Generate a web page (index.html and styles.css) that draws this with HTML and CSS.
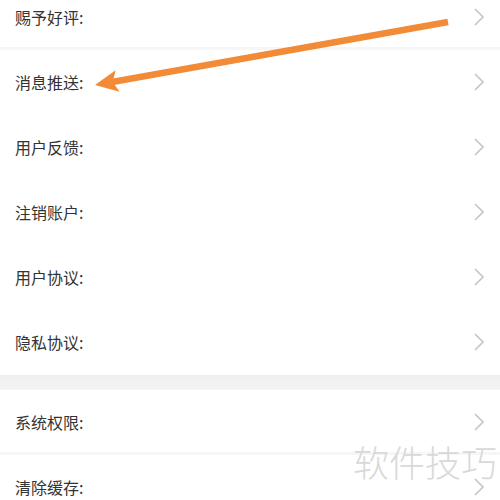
FILE: index.html
```html
<!DOCTYPE html>
<html lang="zh-CN">
<head>
<meta charset="utf-8">
<title>设置</title>
<link rel="stylesheet" href="styles.css">
</head>
<body>
<div class="page">
  <div class="group group-first">
    <div class="row row-first"><span class="label">赐予好评:</span><svg class="chev" viewBox="0 0 10 18"><polyline points="1,1 9,9 1,17"/></svg></div>
    <div class="row"><span class="label">消息推送:</span><svg class="chev" viewBox="0 0 10 18"><polyline points="1,1 9,9 1,17"/></svg></div>
    <div class="row"><span class="label">用户反馈:</span><svg class="chev" viewBox="0 0 10 18"><polyline points="1,1 9,9 1,17"/></svg></div>
    <div class="row"><span class="label">注销账户:</span><svg class="chev" viewBox="0 0 10 18"><polyline points="1,1 9,9 1,17"/></svg></div>
    <div class="row"><span class="label">用户协议:</span><svg class="chev" viewBox="0 0 10 18"><polyline points="1,1 9,9 1,17"/></svg></div>
    <div class="row"><span class="label">隐私协议:</span><svg class="chev" viewBox="0 0 10 18"><polyline points="1,1 9,9 1,17"/></svg></div>
  </div>
  <div class="gap"></div>
  <div class="group">
    <div class="row row-sep"><span class="label">系统权限:</span><svg class="chev" viewBox="0 0 10 18"><polyline points="1,1 9,9 1,17"/></svg></div>
    <div class="row"><span class="label">清除缓存:</span><svg class="chev" viewBox="0 0 10 18"><polyline points="1,1 9,9 1,17"/></svg></div>
  </div>
  <svg class="arrow" width="500" height="500" viewBox="0 0 500 500">
    <line x1="448" y1="22" x2="112" y2="82" stroke="#f28b37" stroke-width="6.5"/>
    <polygon points="95,85 115.6,70.2 112.7,81.9 119.6,91.8" fill="#f28b37"/>
  </svg>
  <div class="watermark">软件技巧</div>
</div>
</body>
</html>
```
FILE: styles.css
```css
html, body {
  margin: 0;
  padding: 0;
  background: #ffffff;
}
.page {
  position: relative;
  width: 500px;
  height: 500px;
  overflow: hidden;
  font-family: "Noto Sans CJK SC", "Noto Sans", sans-serif;
}
.group-first {
  margin-top: -15px;
}
.row {
  height: 65px;
  box-sizing: border-box;
  display: flex;
  align-items: center;
  justify-content: space-between;
  padding: 0 16px 0 15px;
  background: #fff;
}
.row-first {
  padding-top: 3px;
  border-bottom: 3px solid #f6f6f6;
}
.row-sep {
  padding-top: 3px;
  border-bottom: 3px solid #f6f6f6;
}
.label {
  font-size: 16px;
  color: #333333;
  line-height: 1;
  margin-top: -2px;
}
.chev {
  width: 10px;
  height: 18px;
  fill: none;
  stroke: #c6c6c6;
  stroke-width: 1.6;
  margin-top: -2px;
}
.gap {
  height: 15px;
  background: linear-gradient(#efefef, #f4f4f4);
}
.arrow {
  position: absolute;
  left: 0;
  top: 0;
}
.watermark {
  position: absolute;
  right: 3px;
  top: 435px;
  font-size: 36px;
  color: #d9d9d9;
  font-weight: 300;
}
```
